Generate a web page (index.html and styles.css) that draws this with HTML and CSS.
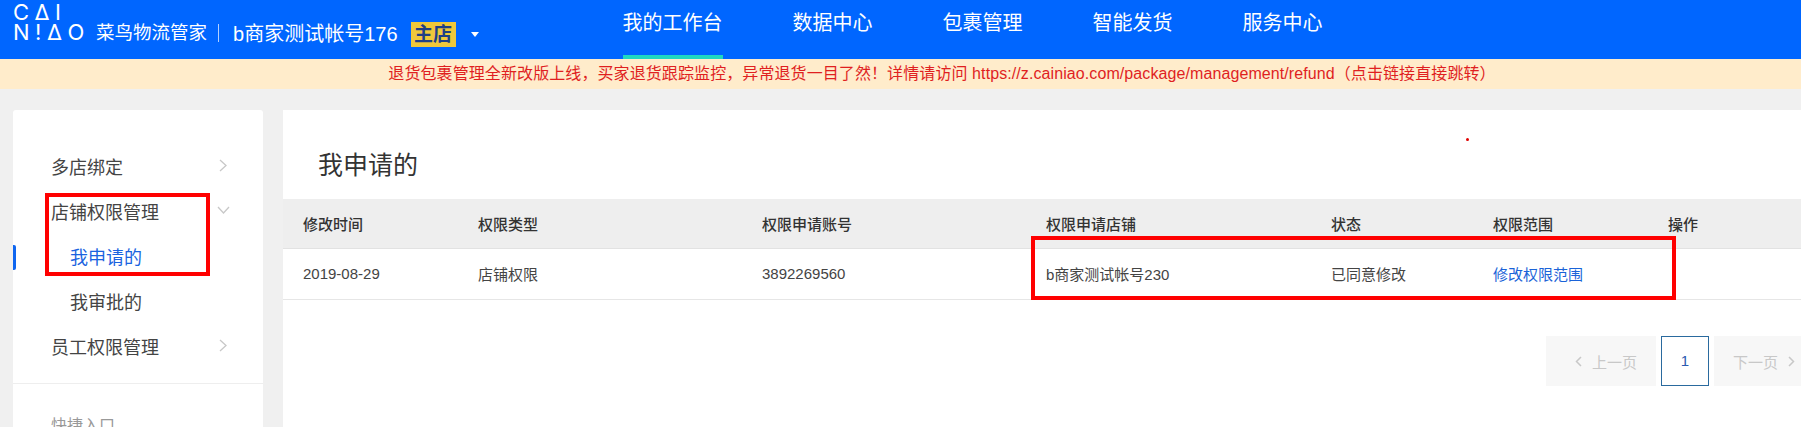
FILE: index.html
```html
<!DOCTYPE html>
<html lang="zh-CN">
<head>
    <meta charset="UTF-8">
    <title>我申请的 - 菜鸟物流管家</title>
    <link rel="stylesheet" href="styles.css">
</head>
<body>
    <div class="page">
        <header class="topbar">
            <div class="logo">
                <span class="logo-line">C&#916;I</span>
                <span class="logo-line">N!&#916;O</span>
            </div>
            <span class="brand">菜鸟物流管家</span>
            <span class="brand-split"></span>
            <span class="account">b商家测试帐号176</span>
            <span class="badge">主店</span>
            <span class="caret"></span>
            <nav class="nav">
                <a class="nav-item active" href="#">我的工作台</a>
                <a class="nav-item" href="#">数据中心</a>
                <a class="nav-item" href="#">包裹管理</a>
                <a class="nav-item" href="#">智能发货</a>
                <a class="nav-item" href="#">服务中心</a>
            </nav>
        </header>

        <div class="notice">退货包裹管理全新改版上线，买家退货跟踪监控，异常退货一目了然！详情请访问 https://z.cainiao.com/package/management/refund（点击链接直接跳转）</div>

        <div class="content">
            <aside class="sidebar">
                <ul class="menu">
                    <li class="menu-item"><span>多店绑定</span><svg class="chev" width="9" height="13" viewBox="0 0 9 13"><path d="M1 1l6 5.500l-6 5.500"/></svg></li>
                    <li class="menu-item"><span>店铺权限管理</span><svg class="chev chev-down" width="13" height="9" viewBox="0 0 13 9"><path d="M1 1l5.500 6l5.500-6"/></svg></li>
                    <li class="menu-item sub current">我申请的</li>
                    <li class="menu-item sub">我审批的</li>
                    <li class="menu-item"><span>员工权限管理</span><svg class="chev" width="9" height="13" viewBox="0 0 9 13"><path d="M1 1l6 5.500l-6 5.500"/></svg></li>
                </ul>
                <div class="quick">快捷入口</div>
                <div class="mark mark-menu"></div>
            </aside>

            <main class="panel">
                <h1 class="panel-title">我申请的</h1>
                <span class="red-dot"></span>
                <table class="grid">
                    <colgroup>
                        <col class="col-time">
                        <col class="col-type">
                        <col class="col-account">
                        <col class="col-shop">
                        <col class="col-state">
                        <col class="col-range">
                        <col>
                    </colgroup>
                    <thead>
                        <tr>
                            <th>修改时间</th>
                            <th>权限类型</th>
                            <th>权限申请账号</th>
                            <th>权限申请店铺</th>
                            <th>状态</th>
                            <th>权限范围</th>
                            <th>操作</th>
                        </tr>
                    </thead>
                    <tbody>
                        <tr>
                            <td>2019-08-29</td>
                            <td>店铺权限</td>
                            <td>3892269560</td>
                            <td>b商家测试帐号230</td>
                            <td>已同意修改</td>
                            <td><a class="link" href="#">修改权限范围</a></td>
                            <td></td>
                        </tr>
                    </tbody>
                </table>
                <div class="pager">
                    <span class="pager-btn pager-prev"><svg class="pager-chev" width="7" height="11" viewBox="0 0 7 11"><path d="M6 1l-4.500 4.500l4.500 4.500"/></svg>上一页</span>
                    <span class="pager-num">1</span>
                    <span class="pager-btn pager-next">下一页<svg class="pager-chev" width="7" height="11" viewBox="0 0 7 11"><path d="M1 1l4.500 4.500l-4.500 4.500"/></svg></span>
                </div>
                <div class="mark mark-row"></div>
            </main>
        </div>
    </div>
</body>
</html>
```

FILE: styles.css
```css
html, body {
    margin: 0;
    height: 100%;
    overflow: hidden;
}
body {
    font-family: "Liberation Sans", "Noto Sans CJK SC", sans-serif;
    background: #f0f0f0;
    color: #333;
}
a {
    text-decoration: none;
}
.page {
    width: 1884px;
}

/* top bar */
.topbar {
    display: flex;
    align-items: flex-start;
    height: 59px;
    padding-left: 13px;
    background: #0066ff;
    color: #fff;
    box-sizing: border-box;
}
.logo {
    display: flex;
    flex-direction: column;
    width: 83px;
    margin-top: 2px;
    font-family: "Inter", sans-serif;
    font-size: 22px;
    line-height: 20px;
    letter-spacing: 5.500px;
}
.logo-line {
    display: block;
}
.brand {
    font-size: 18.500px;
    line-height: 24px;
    margin-top: 21px;
}
.brand-split {
    width: 1px;
    height: 18px;
    margin: 24px 10px 0 11px;
    background: rgba(255, 255, 255, 0.7);
}
.account {
    margin-left: 4px;
    font-size: 20px;
    line-height: 26px;
    margin-top: 21px;
}
.badge {
    width: 45px;
    height: 25px;
    margin: 22px 0 0 13px;
    background: #efc83a;
    color: #1f3f86;
    font-size: 19px;
    font-weight: bold;
    line-height: 25px;
    text-align: center;
}
.caret {
    width: 0;
    height: 0;
    margin: 32px 0 0 15px;
    border-left: 4.500px solid transparent;
    border-right: 4.500px solid transparent;
    border-top: 5px solid #fff;
}
.nav {
    display: flex;
    gap: 70px;
    margin-left: 144px;
}
.nav-item {
    height: 59px;
    box-sizing: border-box;
    padding-top: 9px;
    font-size: 20px;
    line-height: 28px;
    color: #fff;
}
.nav-item.active {
    border-bottom: 4px solid #1fd8c0;
}

/* notice line */
.notice {
    height: 30px;
    background: #ffeccb;
    color: #e01f1f;
    font-size: 16px;
    letter-spacing: 0.090px;
    line-height: 30px;
    text-align: center;
}

/* body */
.content {
    display: flex;
    gap: 20px;
    padding: 21px 13px 0;
}
.sidebar {
    position: relative;
    width: 250px;
    height: 500px;
    flex: none;
    box-sizing: border-box;
    padding-top: 33px;
    background: #fff;
    border-radius: 3px;
}
.menu {
    list-style: none;
    margin: 0;
    padding: 0 0 15px;
    border-bottom: 1px solid #eee;
}
.menu-item {
    position: relative;
    display: flex;
    align-items: center;
    justify-content: space-between;
    height: 45px;
    padding: 0 35px 0 38px;
    font-size: 18px;
    color: #444;
}
.menu-item.sub {
    padding-left: 57px;
}
.menu-item.current {
    color: #1a63e0;
}
.menu-item.current::before {
    content: "";
    position: absolute;
    left: 0;
    top: 12px;
    width: 3px;
    height: 25px;
    background: #0f66f0;
    border-radius: 0 2px 2px 0;
}
.chev {
    fill: none;
    stroke: #c8c8c8;
    stroke-width: 1.300;
}
.chev-down {
    margin-right: -2px;
}
.quick {
    margin: 30px 0 0 38px;
    font-size: 16px;
    line-height: 24px;
    color: #999;
}

/* main panel */
.panel {
    position: relative;
    flex: 1;
    height: 500px;
    background: #fff;
}
.panel-title {
    margin: 0;
    padding: 37px 0 0 35px;
    height: 89px;
    box-sizing: border-box;
    font-size: 25px;
    font-weight: normal;
    line-height: 36px;
    color: #333;
}
.red-dot {
    position: absolute;
    left: 1183px;
    top: 28px;
    width: 3px;
    height: 3px;
    border-radius: 50%;
    background: #e00000;
}
.grid {
    width: 100%;
    border-collapse: collapse;
    table-layout: fixed;
    font-size: 15px;
}
.col-time { width: 175px; }
.col-type { width: 284px; }
.col-account { width: 284px; }
.col-shop { width: 285px; }
.col-state { width: 162px; }
.col-range { width: 175px; }
.grid th {
    height: 49px;
    padding: 0 0 0 20px;
    background: #eee;
    border-bottom: 1px solid #e2e2e2;
    font-weight: 500;
    text-align: left;
    color: #333;
}
.grid td {
    height: 49px;
    padding: 0 0 1px 20px;
    border-bottom: 1px solid #e6e6e6;
    color: #444;
}
.link {
    color: #1a63d8;
}
.pager {
    display: flex;
    gap: 5px;
    justify-content: flex-end;
    margin-top: 36px;
    padding-right: 47px;
}
.pager-btn {
    display: flex;
    align-items: center;
    gap: 10px;
    width: 110px;
    height: 50px;
    box-sizing: border-box;
    background: #f7f7f7;
    color: #c8c8c8;
    font-size: 15px;
}
.pager-prev {
    padding-left: 29px;
}
.pager-next {
    padding-left: 19px;
}
.pager-chev {
    fill: none;
    stroke: #c8c8c8;
    stroke-width: 1.500;
}
.pager-num {
    width: 48px;
    height: 50px;
    box-sizing: border-box;
    border: 1px solid #2a6a9e;
    color: #2a5ab0;
    font-size: 15px;
    line-height: 48px;
    text-align: center;
}

/* red boxes drawn over the screenshot */
.mark {
    position: absolute;
    box-sizing: border-box;
    border: 4px solid #f00;
}
.mark-menu {
    left: 32px;
    top: 83px;
    width: 165px;
    height: 83px;
}
.mark-row {
    left: 748px;
    top: 126px;
    width: 645px;
    height: 64px;
}
```
